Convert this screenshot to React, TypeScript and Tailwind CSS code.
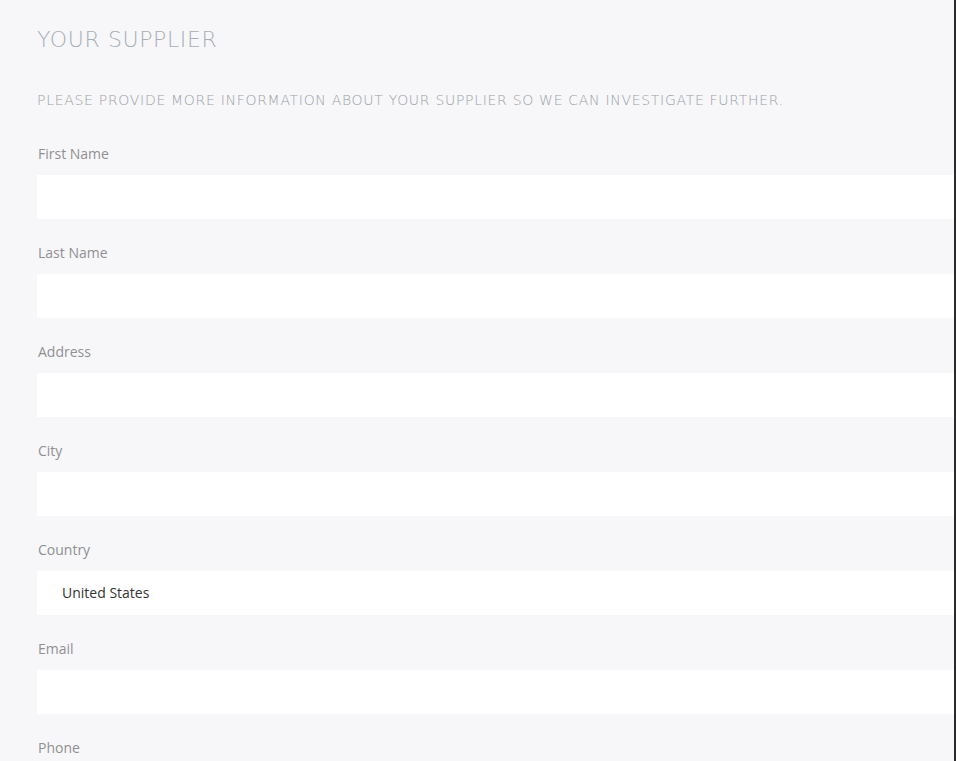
import React from "react";

const fields = ["First Name", "Last Name", "Address", "City", "Country", "Email", "Phone"];

export default function App() {
  return (
    <div className="min-h-[761px] w-full bg-[#f7f7fa] overflow-hidden border-r-2 border-[#2a2a2a]">
      <div className="pl-[37px] pt-[26px]">
        <h1
          className="text-[22px] leading-[28px] tracking-[0.6px] text-[#a7aeb4] font-extralight"
          style={{ fontFamily: '"DejaVu Sans", sans-serif' }}
        >
          YOUR SUPPLIER
        </h1>
        <p
          className="mt-[36px] text-[14px] leading-[20px] tracking-[0.7px] text-[#9a9ea2] font-extralight whitespace-nowrap"
          style={{ fontFamily: '"DejaVu Sans", sans-serif' }}
        >
          PLEASE PROVIDE MORE INFORMATION ABOUT YOUR SUPPLIER SO WE CAN INVESTIGATE FURTHER.
        </p>
        <div className="mt-[33px] flex flex-col gap-[23px]" style={{ fontFamily: '"Open Sans", sans-serif' }}>
          {fields.map((f) => (
            <div key={f} className="flex flex-col">
              <label className="pl-[1px] pt-[1px] text-[14px] leading-[19px] text-[#909090]">{f}</label>
              <div className="mt-[12px] h-[44px] bg-white flex items-center pl-[25px] text-[14px] text-[#333] pb-[1px]">
                {f === "Country" ? "United States" : ""}
              </div>
            </div>
          ))}
        </div>
      </div>
    </div>
  );
}
